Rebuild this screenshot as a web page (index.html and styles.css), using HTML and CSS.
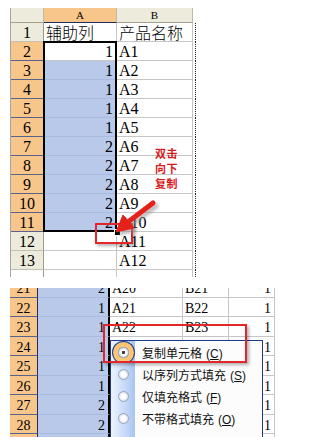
FILE: index.html
```html
<!DOCTYPE html>
<html lang="zh-CN">
  <head>
    <meta charset="UTF-8" />
    <title>辅助列 双击向下复制</title>
    <link rel="stylesheet" href="styles.css">
  </head>
  <body>
    <div class="sheet-top">
      <div class="grid grid-top">
        <div class="hd"></div><div class="hd sel">A</div><div class="hd">B</div><div class="hd edge"></div>

        <div class="rh">1</div><div class="c zh">辅助列</div><div class="c zh">产品名称</div><div class="c dot"></div>
        <div class="rh on">2</div><div class="c num">1</div><div class="c">A1</div><div class="c dot"></div>
        <div class="rh on">3</div><div class="c num hi">1</div><div class="c">A2</div><div class="c dot"></div>
        <div class="rh on">4</div><div class="c num hi">1</div><div class="c">A3</div><div class="c dot"></div>
        <div class="rh on">5</div><div class="c num hi">1</div><div class="c">A4</div><div class="c dot"></div>
        <div class="rh on">6</div><div class="c num hi">1</div><div class="c">A5</div><div class="c dot"></div>
        <div class="rh on">7</div><div class="c num hi">2</div><div class="c">A6</div><div class="c dot"></div>
        <div class="rh on">8</div><div class="c num hi">2</div><div class="c">A7</div><div class="c dot"></div>
        <div class="rh on">9</div><div class="c num hi">2</div><div class="c">A8</div><div class="c dot"></div>
        <div class="rh on">10</div><div class="c num hi">2</div><div class="c">A9</div><div class="c dot"></div>
        <div class="rh on">11</div><div class="c num hi">2</div><div class="c">A10</div><div class="c dot"></div>
        <div class="rh">12</div><div class="c num"></div><div class="c">A11</div><div class="c dot"></div>
        <div class="rh">13</div><div class="c num"></div><div class="c">A12</div><div class="c dot"></div>

        <div class="rh stub"></div><div class="c stub"></div><div class="c stub"></div><div class="c dot stub"></div>
      </div>

      <div class="selbox"></div>
      <div class="handle"></div>
      <div class="redbox redbox-top"></div>
      <div class="note">双击<br>向下<br>复制</div>

      <svg class="arrow" width="310" height="290" viewBox="0 0 310 290">
        <defs>
          <filter id="soft" x="-20%" y="-20%" width="140%" height="140%">
            <feGaussianBlur stdDeviation="1.6" />
          </filter>
        </defs>
        <g fill="#8a8a8a" stroke="#8a8a8a" opacity="0.55" filter="url(#soft)" transform="translate(3 3)">
          <line x1="153" y1="203" x2="128" y2="222" stroke-width="5" stroke-linecap="round" />
          <polygon points="116,232 134,228 123,215" />
        </g>
        <g fill="#e6211c" stroke="#e6211c">
          <line x1="153" y1="203" x2="128" y2="222" stroke-width="5" stroke-linecap="round" />
          <polygon points="116,232 134,228 123,215" stroke-linejoin="round" stroke-width="1" />
        </g>
      </svg>
    </div>

    <div class="sheet-bottom">
      <div class="grid grid-bottom">
        <div class="rh on">21</div><div class="c num hi">2</div><div class="c">A20</div><div class="c">B21</div><div class="c num">1</div>
        <div class="rh on">22</div><div class="c num hi">1</div><div class="c">A21</div><div class="c">B22</div><div class="c num">1</div>
        <div class="rh on">23</div><div class="c num hi">1</div><div class="c">A22</div><div class="c">B23</div><div class="c num">1</div>
        <div class="rh on">24</div><div class="c num hi">1</div><div class="c">A23</div><div class="c">B24</div><div class="c num">1</div>
        <div class="rh on">25</div><div class="c num hi">1</div><div class="c">A24</div><div class="c">B25</div><div class="c num">1</div>
        <div class="rh on">26</div><div class="c num hi">1</div><div class="c">A25</div><div class="c">B26</div><div class="c num">1</div>
        <div class="rh on">27</div><div class="c num hi">2</div><div class="c">A26</div><div class="c">B27</div><div class="c num">1</div>
        <div class="rh on">28</div><div class="c num hi">2</div><div class="c">A27</div><div class="c">B28</div><div class="c num">1</div>
        <div class="rh on">29</div><div class="c num hi">2</div><div class="c">A28</div><div class="c">B29</div><div class="c num">1</div>
      </div>

      <ul class="menu">
        <li class="item checked"><span class="gut"><span class="radio"></span></span><span>复制单元格<span class="key">(<u>C</u>)</span></span></li>
        <li class="item"><span class="gut"><span class="radio"></span></span><span>以序列方式填充<span class="key">(<u>S</u>)</span></span></li>
        <li class="item"><span class="gut"><span class="radio"></span></span><span>仅填充格式<span class="key">(<u>F</u>)</span></span></li>
        <li class="item"><span class="gut"><span class="radio"></span></span><span>不带格式填充<span class="key">(<u>O</u>)</span></span></li>
        <li class="item"><span class="gut"></span></li>
      </ul>
      <div class="redbox redbox-menu"></div>
    </div>
  </body>
</html>
```

FILE: styles.css
```css
body {
  margin: 0;
  background: #fff;
  color: #000;
  font-family: "Liberation Serif", "Noto Sans CJK SC", serif;
}

/* shared sheet cells */
.grid {
  display: grid;
}
.c {
  box-sizing: border-box;
  border-right: 1px solid #c6c6c6;
  border-bottom: 1px solid #c6c6c6;
  padding: 1px 2px 0 2px;
  white-space: nowrap;
  overflow: hidden;
}
.c.num {
  text-align: right;
  padding-right: 3px;
}
.c.hi {
  background: #b9c9ea;
  border-bottom-color: #aabbdd;
}
.c.zh {
  font-family: "Noto Sans CJK SC", sans-serif;
  font-weight: 300;
  line-height: 18px;
  padding-top: 0;
  overflow: visible;
}
.rh {
  box-sizing: border-box;
  background: #ecebdc;
  text-align: center;
  border-right: 1px solid #9d9b89;
  border-bottom: 1px solid #c3c1af;
  padding-top: 1px;
}
.rh.on {
  background: #f8c68a;
  border-right-color: #1f2d5c;
  border-bottom-color: #56628a;
}
.hd {
  box-sizing: border-box;
  background: #ecebdc;
  font-size: 11px;
  line-height: 14px;
  text-align: center;
  border-right: 1px solid #bcbaa8;
  border-bottom: 1px solid #a3a18f;
}
.hd.sel {
  background: #f8c68a;
  border-bottom-color: #1f2d5c;
}
.hd.edge {
  background: #fff;
  border: none;
}

/* top screenshot */
.sheet-top {
  position: relative;
  margin: 8px 0 0 10px;
  width: 186px;
}
.grid-top {
  grid-template-columns: 33px 73px 76px 3px;
  grid-template-rows: 15px repeat(13, 19px) 7px;
  border-left: 1px solid #a5a5a5;
  font-size: 16px;
  line-height: 17px;
}
.grid-top .c.dot {
  border-right: 1px dotted #222;
  border-bottom: none;
  padding: 0;
}
.grid-top .stub {
  background: #fff;
  border-bottom: none;
}
.selbox {
  position: absolute;
  left: 33px;
  top: 33px;
  width: 74px;
  height: 191px;
  box-sizing: border-box;
  border: 2px solid #000;
}
.handle {
  position: absolute;
  left: 104px;
  top: 221px;
  width: 5px;
  height: 5px;
  background: #000;
  border: 1px solid #fff;
}
.redbox {
  position: absolute;
  box-sizing: border-box;
  border: 2px solid #e3262a;
  box-shadow: 2px 2px 3px rgba(0, 0, 0, 0.3);
}
.redbox-top {
  left: 85px;
  top: 215px;
  width: 38px;
  height: 21px;
}
.note {
  position: absolute;
  left: 145px;
  top: 138px;
  color: #d8181c;
  font-family: "Noto Sans CJK SC", sans-serif;
  font-weight: 700;
  font-size: 11px;
  line-height: 15px;
  letter-spacing: 0.5px;
}
.arrow {
  position: absolute;
  left: -10px;
  top: -8px;
}

/* bottom screenshot */
.sheet-bottom {
  position: relative;
  margin: 11px 0 0 10px;
  height: 149px;
  overflow: hidden;
}
.grid-bottom {
  grid-template-columns: 28px 72px 73px 46px 46px;
  grid-auto-rows: 19.5px;
  margin-top: -10px;
  width: 265px;
  font-size: 14px;
  line-height: 17px;
}
.grid-bottom .c.hi {
  border-right: 2px solid #000;
}
.grid-bottom .rh {
  padding-top: 2px;
}
.grid-bottom .c {
  padding-top: 2px;
}

.menu {
  position: absolute;
  left: 100px;
  top: 52px;
  width: 153px;
  margin: 0;
  padding: 0;
  list-style: none;
  box-sizing: border-box;
  border: 1px solid #1d3b8e;
  background: #fcfcfc;
  font-family: "Noto Sans CJK SC", sans-serif;
  font-size: 12px;
  color: #111;
}
.item {
  display: flex;
  align-items: center;
  height: 22px;
  gap: 7px;
  white-space: nowrap;
}
.key {
  font-family: "Liberation Sans", sans-serif;
  font-size: 12px;
  margin-left: 4px;
}
.key u {
  text-underline-offset: 1px;
}
.gut {
  align-self: stretch;
  width: 24px;
  display: flex;
  align-items: center;
  justify-content: center;
  background: linear-gradient(to right, #eef4fe, #c5d8f7 60%, #a9c4ef);
}
.radio {
  width: 9px;
  height: 9px;
  border-radius: 50%;
  border: 1px solid #9aa7bd;
  background: radial-gradient(circle at 50% 50%, #fff 35%, #d6dde8 75%);
}
.checked .radio {
  background: radial-gradient(circle at 50% 50%, #333 0, #4a4a4a 22%, #fff 30%, #e6e9ef 70%);
  box-shadow: 0 0 0 5px #fbc574, 0 0 0 6px #1d3b8e;
}
.redbox-menu {
  left: 93px;
  top: 36px;
  width: 144px;
  height: 39px;
  border-width: 2.5px;
}
```
